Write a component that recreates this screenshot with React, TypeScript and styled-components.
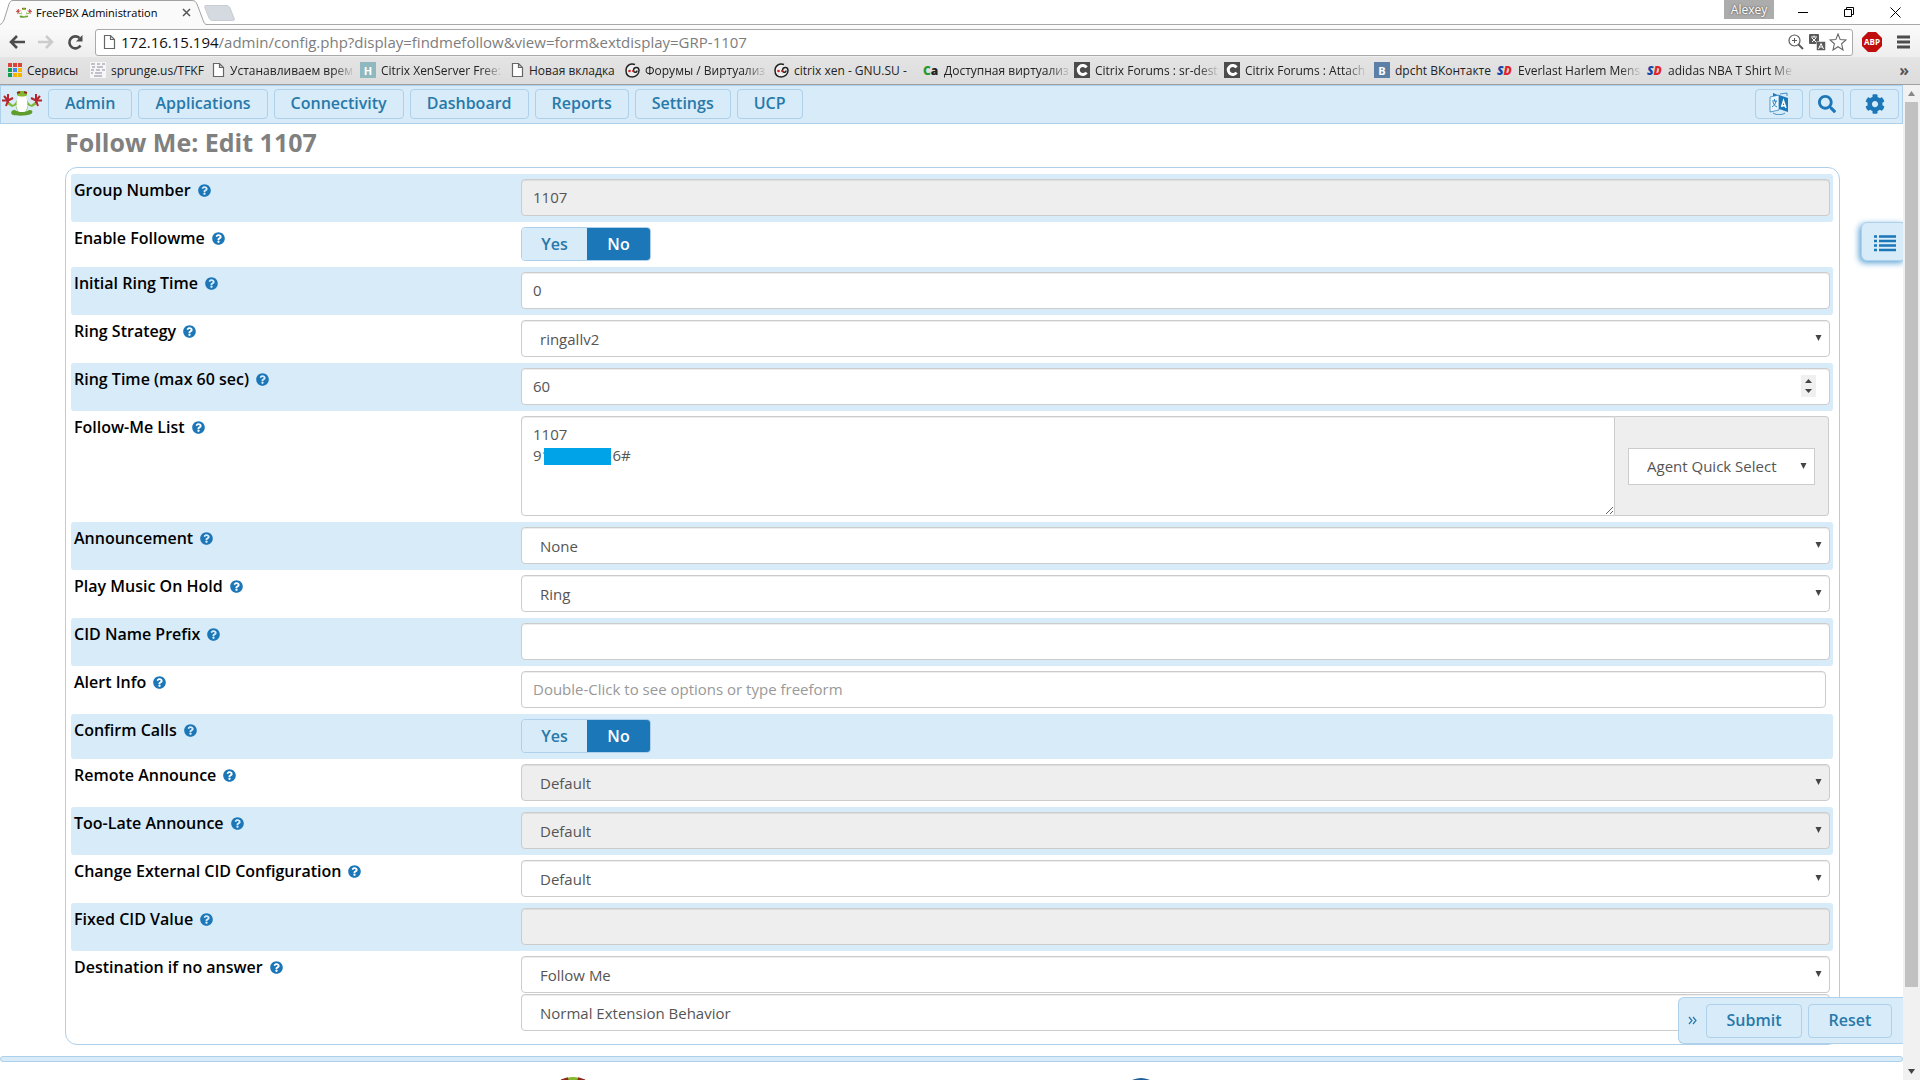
import React, { ReactNode } from "react";
import styled, { createGlobalStyle, css } from "styled-components";
import { FaCog, FaSearch, FaQuestionCircle } from "react-icons/fa";

const C = {
  pale: "#d7ebf9",
  edge: "#aed0ea",
  link: "#2779aa",
  active: "#1c77b8",
  field: "#cccccc",
  muted: "#eeeeee",
};

const Global = createGlobalStyle`
  *, *::before, *::after { box-sizing: border-box; }
  body { margin: 0; background: #fff; font-family: "Open Sans", "Noto Sans", sans-serif; color: #000; }
  button, input, select, textarea { font-family: inherit; margin: 0; }
  h1 { margin: 0; }
`;

const Window = styled.div`
  display: flex;
  flex-direction: column;
  height: 100vh;
  overflow: hidden;
`;

/* ---------- browser frame ---------- */

const Plain = styled.button`
  display: flex;
  align-items: center;
  justify-content: center;
  padding: 0;
  border: 0;
  background: none;
  color: inherit;
`;

const TabStrip = styled.header`
  display: flex;
  flex: none;
  height: 25px;
  border-bottom: 1px solid #a8a8a8;
`;

const Tab = styled.div`
  position: relative;
  z-index: 0;
  display: flex;
  align-items: center;
  width: 206px;
  height: 26px;
  padding: 0 15px 1px 16px;
`;

const TabShape = styled.svg`
  position: absolute;
  left: 0;
  top: 0;
  z-index: -1;
`;

const TabTitle = styled.span`
  flex: 1;
  padding-left: 4px;
  white-space: nowrap;
  font-size: 11px;
  line-height: 24px;
`;

const WindowControls = styled.div`
  display: flex;
  margin-left: auto;
  padding-right: 2px;
  height: 24px;
`;

const Profile = styled(Plain)`
  width: 50px;
  height: 19px;
  margin-right: 6px;
  background: #acacac;
  color: #fff;
  font-size: 12px;
  text-shadow: 0 0 2px #333;
`;

const WindowButton = styled(Plain)`
  width: 46px;
`;

const Toolbar = styled.div`
  display: flex;
  align-items: center;
  flex: none;
  height: 32px;
  padding: 3px 10px 1px 8px;
  background: linear-gradient(#fbfbfb, #eeeeee);
`;

const ToolButton = styled(Plain)`
  width: 18px;
  height: 18px;
  margin-right: 11px;
`;

const Omnibox = styled.div`
  display: flex;
  align-items: center;
  flex: 1;
  height: 27px;
  padding: 0 4px 0 7px;
  border: 1px solid #a9a9a9;
  border-radius: 3px;
  background: #fff;
`;

const Address = styled.div`
  flex: 1;
  padding-left: 5px;
  font-size: 15px;
  line-height: 24px;
  color: #7d7d7d;
  white-space: nowrap;
  b { font-weight: 400; color: #111; }
`;

const OmniButton = styled(Plain)`
  width: 20px;
  height: 20px;
  margin-left: 1px;
`;

const Extension = styled(Plain)`
  margin: 0 15px 0 9px;
`;

const Bookmarks = styled.nav`
  display: flex;
  align-items: center;
  flex: none;
  height: 28px;
  padding: 0 11px 1px 8px;
  background: linear-gradient(#e4e4e4, #dcdcdc);
  border-bottom: 1px solid #a0a0a0;
`;

const Bookmark = styled.a<{ $w: number }>`
  display: flex;
  align-items: center;
  flex: none;
  gap: 5px;
  width: ${(p) => p.$w}px;
  color: #222;
  font-size: 12px;
  text-decoration: none;
`;

const BookmarkText = styled.span<{ $fade?: boolean }>`
  white-space: nowrap;
  ${(p) => p.$fade && css`mask-image: linear-gradient(to left, rgba(0, 0, 0, 0.1), #000 20px);`}
`;

const Overflow = styled(Plain)`
  margin-left: auto;
  font-size: 16px;
  font-weight: 700;
  line-height: 20px;
  color: #555;
`;

const Letter = styled.span<{ $bg: string }>`
  display: flex;
  align-items: center;
  justify-content: center;
  width: 16px;
  height: 16px;
  background: ${(p) => p.$bg};
  color: #fff;
  font-size: 11px;
  font-weight: 700;
`;

const Mark = styled.span<{ $italic?: boolean }>`
  flex: none;
  width: 16px;
  font-size: 12px;
  font-weight: 800;
  white-space: nowrap;
  font-style: ${(p) => (p.$italic ? "italic" : "normal")};
`;

const Tint = styled.span<{ $c: string }>`
  color: ${(p) => p.$c};
`;

/* ---------- page ---------- */

const Viewport = styled.div`
  display: flex;
  flex: 1;
  min-height: 0;
`;

const Page = styled.div`
  position: relative;
  flex: 1;
  min-width: 0;
  overflow: hidden;
`;

const Scrollbar = styled.div`
  display: flex;
  flex-direction: column;
  align-items: center;
  flex: none;
  width: 17px;
  background: #f1f1f1;
`;

const ScrollThumb = styled.div`
  flex: 1;
  width: 13px;
  background: #c1c1c1;
`;

const ScrollRest = styled.div`
  height: 76px;
`;

const ScrollArrow = styled(Plain)`
  width: 17px;
  height: 17px;
`;

const NavBar = styled.nav`
  display: flex;
  align-items: center;
  gap: 6px;
  height: 39px;
  padding: 0 3px 2px 1px;
  background: ${C.pale};
  border: 1px solid ${C.edge};
`;

const Logo = styled.a`
  display: flex;
  width: 40px;
`;

const box = css`
  display: flex;
  align-items: center;
  justify-content: center;
  border: 1px solid ${C.edge};
  border-radius: 4px;
  background: ${C.pale};
  color: ${C.link};
  font-size: 16px;
  font-weight: 600;
`;

const NavButton = styled.button`
  ${box}
  height: 30px;
  padding: 0 16px 1px;
`;

const IconButton = styled.button<{ $w: number }>`
  ${box}
  width: ${(p) => p.$w}px;
  height: 30px;
  padding: 0;
  color: ${C.active};
`;

const Spacer = styled.span`
  flex: 1;
`;

const Content = styled.main`
  padding: 0 63px 0 65px;
`;

const Title = styled.h1`
  padding: 2px 0 9px;
  font-size: 25px;
  line-height: 32px;
  font-weight: 700;
  color: #808080;
`;

const Panel = styled.form`
  padding: 6px 6px 7px 5px;
  border: 1px solid ${C.edge};
  border-radius: 12px;
`;

const Row = styled.div<{ $striped?: boolean }>`
  display: grid;
  grid-template-columns: 1fr 3fr;
  padding: 5px 3px 6px;
  border-radius: 3px;
  background: ${(p) => (p.$striped ? C.pale : "transparent")};
`;

const LabelCell = styled.div`
  display: flex;
  align-items: center;
  align-self: start;
  gap: 7px;
  font-size: 16px;
  line-height: 22px;
  font-weight: 600;
  svg { color: ${C.active}; }
`;

const FieldCell = styled.div`
  display: grid;
  gap: 1px;
  padding-left: 8px;
`;

const fieldBox = css`
  display: block;
  width: 100%;
  height: 37px;
  border: 1px solid ${C.field};
  border-radius: 4px;
  background: #fff;
  box-shadow: inset 0 1px 1px rgba(0, 0, 0, 0.075);
  color: #555;
  font-size: 15px;
  font-weight: 400;
  opacity: 1;
  &:disabled, &:read-only:not(select) { background: ${C.muted}; }
`;

const Input = styled.input`
  ${fieldBox}
  padding: 0 11px 2px;
  &::placeholder { color: #999; }
  &::-webkit-inner-spin-button { display: none; }
`;

const ShortField = styled.div`
  padding-right: 4px;
`;

const SelectWrap = styled.div<{ $w?: number }>`
  position: relative;
  width: ${(p) => (p.$w ? p.$w + "px" : "auto")};
`;

const SelectBox = styled.select<{ $square?: boolean }>`
  ${fieldBox}
  appearance: none;
  padding: 0 18px;
  ${(p) => p.$square && css`border-radius: 0; box-shadow: none;`}
`;

const Arrow = styled.svg`
  position: absolute;
  right: 8px;
  top: 15px;
  pointer-events: none;
`;

const Spinner = styled.svg`
  position: absolute;
  right: 14px;
  top: 7px;
  pointer-events: none;
`;

const Group = styled.div`
  display: flex;
  height: 100px;
  margin-right: 1px;
`;

const AreaWrap = styled.div`
  position: relative;
  flex: 1;
`;

const Area = styled.textarea`
  ${fieldBox}
  height: 100px;
  padding: 7px 11px;
  line-height: 21px;
  border-radius: 4px 0 0 4px;
  resize: vertical;
`;

const Redaction = styled.span`
  position: absolute;
  left: 23px;
  top: 32px;
  width: 67px;
  height: 17px;
  background: #00a2e8;
`;

const Addon = styled.div`
  display: flex;
  align-items: center;
  padding: 0 13px;
  border: 1px solid ${C.field};
  border-left: 0;
  border-radius: 0 4px 4px 0;
  background: ${C.muted};
`;

const ToggleSet = styled.div`
  display: flex;
  width: 130px;
  height: 34px;
  border: 1px solid ${C.edge};
  border-radius: 4px;
  overflow: hidden;
`;

const ToggleOption = styled.label<{ $on?: boolean }>`
  display: flex;
  align-items: center;
  justify-content: center;
  flex: ${(p) => (p.$on ? "0 0 63px" : "1")};
  background: ${(p) => (p.$on ? C.active : C.pale)};
  color: ${(p) => (p.$on ? "#fff" : C.link)};
  font-size: 16px;
  font-weight: 600;
`;

const HiddenRadio = styled.input`
  position: absolute;
  opacity: 0;
  pointer-events: none;
`;

const FooterRule = styled.hr`
  height: 6px;
  margin: 11px 0 15px;
  border: 1px solid ${C.edge};
  border-radius: 3px;
  background: ${C.pale};
`;

const Footer = styled.footer`
  display: grid;
  grid-template-columns: 65fr 57fr 78fr;
  padding-left: 1px;
  svg { justify-self: end; }
`;

const SideMenu = styled.button`
  position: absolute;
  right: -4px;
  top: 137px;
  display: flex;
  align-items: center;
  width: 46px;
  height: 39px;
  padding: 3px 0 0 12px;
  border: 1px solid ${C.edge};
  border-radius: 6px;
  background: ${C.pale};
  box-shadow: -2px 2px 6px #5ba3d6;
`;

const ActionBar = styled.div`
  position: absolute;
  right: 0;
  bottom: 36px;
  display: flex;
  align-items: center;
  gap: 6px;
  height: 47px;
  padding: 0 11px 0 0;
  border: 1px solid ${C.edge};
  border-right: 0;
  border-radius: 6px 0 0 6px;
  background: ${C.pale};
`;

const Collapse = styled(Plain)`
  width: 21px;
  padding-left: 6px;
  color: ${C.link};
`;

const Action = styled.button<{ $w: number }>`
  ${box}
  width: ${(p) => p.$w}px;
  height: 34px;
  padding: 0 0 1px;
`;

/* ---------- drawings ---------- */

const Frog = ({ w, h }: { w: number; h: number }) => (
  <svg width={w} height={h} viewBox="0 0 40 26" aria-hidden>
    <path d="M16 6C15 9 14 12 11 14L7 11L5 13L10 16C13 15 14 14 15 14C14 16 14 19 17 21H23C26 19 26 16 25 14C26 14 27 15 30 16L35 13L33 11L29 14C26 12 25 9 24 6Z" fill="#7fb93a" />
    <path d="M16 5C14 10 14 19 17 21C18 22 22 22 23 21C26 19 26 10 24 5Z" fill="#fff" />
    <path d="M15 4C15 1 17 0 20 0S25 1 25 4C24 6 16 6 15 4Z" fill="#86b82d" />
    <path d="M15 2L18 1M25 2L22 1" stroke="#8d2a1a" strokeWidth="2" />
    <path d="M12 19C14 19 15 21 20 21S26 19 28 19C31 19 31 22 29 23C25 25 15 25 11 24C8 23 9 19 12 19Z" fill="#5f9e2c" />
    <path d="M2 5L6 9.500L6 3M6 9.500L11 7M6 9.500L0 9.500M6 9.500L4 15M38 5L34 9.500L34 3M34 9.500L29 7M34 9.500L40 9.500M34 9.500L36 15" stroke="#b8242c" strokeWidth="2" fill="none" />
  </svg>
);

const FileIcon = () => (
  <svg width="13" height="16" viewBox="0 0 13 16" aria-hidden>
    <path d="M1.500 1.500H7.500L11.500 5.500V14.500H1.500Z M7.500 1.500V5.500H11.500" fill="#fff" stroke="#666" strokeWidth="1.200" />
  </svg>
);

const Apps = () => (
  <svg width="14" height="14" viewBox="0 0 14 14" aria-hidden>
    {["#db4437", "#db4437", "#db4437", "#0f9d58", "#4285f4", "#f4b400", "#0f9d58", "#f4b400", "#f4b400"].map((c, i) => (
      <rect key={i} x={(i % 3) * 5} y={Math.floor(i / 3) * 5} width="4" height="4" fill={c} />
    ))}
  </svg>
);

const Snippet = () => (
  <svg width="16" height="16" viewBox="0 0 16 16" aria-hidden>
    <rect width="16" height="16" fill="#f6f6f6" />
    <path d="M1 2h4M7 2h3M12 2h3M2 5h3M7 5h6M1 8h3M6 8h4M12 8h3M1 11h2M5 11h7M4 14h8" stroke="#8b8ba0" />
  </svg>
);

const Swirl = () => (
  <svg width="15" height="15" viewBox="0 0 15 15" aria-hidden>
    <path d="M10 1.500C5 -0.500 1 3 1 7.500S4 14 7.500 14 14 11 14 7.500C14 3.500 9 3.500 8.500 7C8.500 10 12 10 12 7.500" fill="#eee" stroke="#222" strokeWidth="1.500" />
    <circle cx="4.500" cy="8" r="1.300" fill="#c22" />
    <circle cx="8" cy="8" r="1" fill="#c22" />
  </svg>
);

const CitrixC = () => (
  <svg width="16" height="16" viewBox="0 0 16 16" aria-hidden>
    <rect width="16" height="16" fill="#4c4c4c" />
    <path d="M12.500 5.500A4.500 4.500 0 1 0 12.500 10.500" fill="none" stroke="#fff" strokeWidth="3" />
  </svg>
);

const SelectArrow = () => (
  <Arrow width="7" height="6" viewBox="0 0 7 6" aria-hidden>
    <path d="M0.500 0H6.500L3.500 6Z" fill="#444" />
  </Arrow>
);

const Translate = () => (
  <svg width="20" height="23" viewBox="0 0 20 23" aria-hidden>
    <path d="M4 1L11 4V7L4 4Z" fill={C.active} />
    <path d="M1 5L10 3V18L1 20Z" fill="#e9f4fc" stroke={C.active} strokeWidth="0.700" />
    <path d="M10 3L19 6V20L10 17Z" fill={C.active} />
    <path d="M12.500 15L14.500 8.500L17 16M13 13.500L16 14" fill="none" stroke="#fff" strokeWidth="1.400" />
    <path d="M3 9H8M5.500 7V9M7 9C6.500 12 5 14 3 15M4 10C5 13 6 14 8 15" fill="none" stroke={C.active} strokeWidth="0.900" />
    <path d="M4 21C8 23.500 13 23 16 21M11 2L18 1V4" fill="none" stroke={C.active} strokeWidth="0.800" />
  </svg>
);

/* ---------- fields ---------- */

const Select = ({ id, value, disabled }: { id: string; value: string; disabled?: boolean }) => (
  <SelectWrap>
    <SelectBox id={id} disabled={disabled}>
      <option>{value}</option>
    </SelectBox>
    <SelectArrow />
  </SelectWrap>
);

const YesNo = ({ id }: { id: string }) => (
  <ToggleSet>
    <ToggleOption>
      <HiddenRadio type="radio" name={id} />
      Yes
    </ToggleOption>
    <ToggleOption $on>
      <HiddenRadio type="radio" name={id} id={id} defaultChecked />
      No
    </ToggleOption>
  </ToggleSet>
);

const fields: { id: string; label: string; control: ReactNode }[] = [
  { id: "grpnum", label: "Group Number", control: <Input id="grpnum" defaultValue="1107" readOnly /> },
  { id: "ddial", label: "Enable Followme", control: <YesNo id="ddial" /> },
  { id: "prering", label: "Initial Ring Time", control: <Input id="prering" defaultValue="0" /> },
  { id: "strategy", label: "Ring Strategy", control: <Select id="strategy" value="ringallv2" /> },
  {
    id: "grptime",
    label: "Ring Time (max 60 sec)",
    control: (
      <SelectWrap>
        <Input id="grptime" type="number" defaultValue="60" />
        <Spinner width="15" height="22" viewBox="0 0 15 22" aria-hidden>
          <rect width="15" height="22" fill="#f0f0f0" />
          <path d="M4 8L7.500 4L11 8ZM4 14L7.500 18L11 14Z" fill="#444" />
        </Spinner>
      </SelectWrap>
    ),
  },
  {
    id: "grplist",
    label: "Follow-Me List",
    control: (
      <Group>
        <AreaWrap>
          <Area id="grplist" defaultValue={"1107\n91" + "\u00a0".repeat(16) + "6#"} />
          <Redaction />
        </AreaWrap>
        <Addon>
          <SelectWrap $w={187}>
            <SelectBox $square aria-label="Agent Quick Select">
              <option>Agent Quick Select</option>
            </SelectBox>
            <SelectArrow />
          </SelectWrap>
        </Addon>
      </Group>
    ),
  },
  { id: "annmsg", label: "Announcement", control: <Select id="annmsg" value="None" /> },
  { id: "ringing", label: "Play Music On Hold", control: <Select id="ringing" value="Ring" /> },
  { id: "grppre", label: "CID Name Prefix", control: <Input id="grppre" /> },
  {
    id: "dring",
    label: "Alert Info",
    control: (
      <ShortField>
        <Input id="dring" placeholder="Double-Click to see options or type freeform" />
      </ShortField>
    ),
  },
  { id: "needsconf", label: "Confirm Calls", control: <YesNo id="needsconf" /> },
  { id: "remotealert", label: "Remote Announce", control: <Select id="remotealert" value="Default" disabled /> },
  { id: "toolate", label: "Too-Late Announce", control: <Select id="toolate" value="Default" disabled /> },
  { id: "changecid", label: "Change External CID Configuration", control: <Select id="changecid" value="Default" /> },
  { id: "fixedcid", label: "Fixed CID Value", control: <Input id="fixedcid" disabled /> },
  {
    id: "goto",
    label: "Destination if no answer",
    control: (
      <>
        <Select id="goto" value="Follow Me" />
        <SelectWrap>
          <SelectBox aria-label="Destination">
            <option>Normal Extension Behavior</option>
          </SelectBox>
        </SelectWrap>
      </>
    ),
  },
];

const SD = () => (
  <Mark $italic>
    <Tint $c="#1747a6">S</Tint>
    <Tint $c="#e0262d">D</Tint>
  </Mark>
);

const bookmarks: { icon: ReactNode; text: string; w: number; fade?: boolean }[] = [
  { icon: <Apps />, text: "Сервисы", w: 82 },
  { icon: <Snippet />, text: "sprunge.us/TFKF", w: 122 },
  { icon: <FileIcon />, text: "Устанавливаем врем", w: 148, fade: true },
  { icon: <Letter $bg="#8fb9bf">H</Letter>, text: "Citrix XenServer Free:", w: 151, fade: true },
  { icon: <FileIcon />, text: "Новая вкладка", w: 114 },
  { icon: <Swirl />, text: "Форумы / Виртуализ", w: 149, fade: true },
  { icon: <Swirl />, text: "citrix xen - GNU.SU -", w: 149 },
  {
    icon: (
      <Mark>
        <Tint $c="#2a9a2a">C</Tint>a
      </Mark>
    ),
    text: "Доступная виртуализ",
    w: 151,
    fade: true,
  },
  { icon: <CitrixC />, text: "Citrix Forums : sr-dest", w: 150, fade: true },
  { icon: <CitrixC />, text: "Citrix Forums : Attach", w: 150, fade: true },
  { icon: <Letter $bg="#5b7fa6">B</Letter>, text: "dpcht ВКонтакте", w: 123 },
  { icon: <SD />, text: "Everlast Harlem Mens", w: 150, fade: true },
  { icon: <SD />, text: "adidas NBA T Shirt Me", w: 150, fade: true },
];

const menu = ["Admin", "Applications", "Connectivity", "Dashboard", "Reports", "Settings", "UCP"];

export default function App() {
  return (
    <Window>
      <Global />
      <TabStrip>
        <Tab>
          <TabShape width="240" height="26" viewBox="0 0 240 26" aria-hidden>
            <path d="M0 24.500C2 24 3 22 4 20L9 4C10 1.500 11 0.500 13 0.500H192C195 0.500 196 2 197 4L203 20C204 23 205 24.500 207 24.500V26H0Z" fill="#fafafa" />
            <path d="M0 24.500C2 24 3 22 4 20L9 4C10 1.500 11 0.500 13 0.500H192C195 0.500 196 2 197 4L203 20C204 23 205 24.500 207 24.500" fill="none" stroke="#a0a0a0" />
            <path d="M206 5.500H226C228 5.500 229 6 230 8L234 18C235 20 234 20.500 232 20.500H213C211 20.500 210 20 209 18L205 8C204.500 6 204.500 5.500 206 5.500Z" fill="#d5d9e0" stroke="#c9ccd2" />
          </TabShape>
          <Frog w={16} h={12} />
          <TabTitle>FreePBX Administration</TabTitle>
          <Plain aria-label="Close tab">
            <svg width="9" height="9" viewBox="0 0 9 9">
              <path d="M1 1L8 8M8 1L1 8" stroke="#555" strokeWidth="1.500" />
            </svg>
          </Plain>
        </Tab>
        <WindowControls>
          <Profile>Alexey</Profile>
          <WindowButton aria-label="Minimize">
            <svg width="10" height="10"><path d="M0 5.500H10" stroke="#000" /></svg>
          </WindowButton>
          <WindowButton aria-label="Restore">
            <svg width="10" height="10"><path d="M0.500 2.500H7.500V9.500H0.500ZM2.500 2.500V0.500H9.500V7.500H7.500" fill="none" stroke="#000" /></svg>
          </WindowButton>
          <WindowButton aria-label="Close">
            <svg width="11" height="11"><path d="M0.500 0.500L10.500 10.500M10.500 0.500L0.500 10.500" stroke="#000" /></svg>
          </WindowButton>
        </WindowControls>
      </TabStrip>
      <Toolbar>
        <ToolButton aria-label="Back">
          <svg width="18" height="16" viewBox="0 0 18 16"><path d="M17 8H3M9 2L3 8L9 14" fill="none" stroke="#4d4d4d" strokeWidth="2.600" /></svg>
        </ToolButton>
        <ToolButton aria-label="Forward">
          <svg width="18" height="16" viewBox="0 0 18 16"><path d="M1 8H15M9 2L15 8L9 14" fill="none" stroke="#cccccc" strokeWidth="2.600" /></svg>
        </ToolButton>
        <ToolButton aria-label="Reload">
          <svg width="17" height="17" viewBox="0 0 17 17">
            <path d="M13.500 11.500A6 6 0 1 1 12.500 4" fill="none" stroke="#4d4d4d" strokeWidth="2.600" />
            <path d="M15.500 1V7.500H9Z" fill="#4d4d4d" />
          </svg>
        </ToolButton>
        <Omnibox>
          <FileIcon />
          <Address role="textbox" aria-label="Address">
            <b>172.16.15.194</b>/admin/config.php?display=findmefollow&amp;view=form&amp;extdisplay=GRP-1107
          </Address>
          <OmniButton aria-label="Zoom">
            <svg width="16" height="16" viewBox="0 0 16 16">
              <circle cx="6.500" cy="6.500" r="5.500" fill="none" stroke="#5a5a5a" strokeWidth="1.200" />
              <path d="M4 6.500H9M6.500 4V9" stroke="#5a5a5a" />
              <path d="M10.500 10.500L15 15" stroke="#5a5a5a" strokeWidth="2" />
            </svg>
          </OmniButton>
          <OmniButton aria-label="Translate page">
            <svg width="17" height="17" viewBox="0 0 17 17">
              <rect width="10" height="10" rx="1" fill="#5a5a5a" />
              <path d="M2 3H8M5 1.500V3M3 4L7 8M7 4L3 8" stroke="#fff" fill="none" />
              <rect x="7.500" y="7.500" width="9" height="9" rx="1" fill="#5a5a5a" stroke="#fff" strokeWidth="0.500" />
              <path d="M9.500 15L12 9.500L14.500 15M10.500 13H13.500" stroke="#fff" fill="none" />
            </svg>
          </OmniButton>
          <OmniButton aria-label="Bookmark">
            <svg width="18" height="18" viewBox="0 0 18 18">
              <path d="M9 1L11.200 6.600L17 7L12.600 10.800L14 17L9 13.700L4 17L5.400 10.800L1 7L6.800 6.600Z" fill="#fff" stroke="#666" strokeWidth="1.100" />
            </svg>
          </OmniButton>
        </Omnibox>
        <Extension aria-label="Adblock Plus">
          <svg width="20" height="20" viewBox="0 0 20 20">
            <path d="M6 0H14L20 6V14L14 20H6L0 14V6Z" fill="#c00d0d" />
            <text x="10" y="13" textAnchor="middle" fontSize="8" fontWeight="700" fill="#fff">ABP</text>
          </svg>
        </Extension>
        <Plain aria-label="Menu">
          <svg width="13" height="14" viewBox="0 0 13 14"><path d="M0 2H13M0 7H13M0 12H13" stroke="#4d4d4d" strokeWidth="3" /></svg>
        </Plain>
      </Toolbar>
      <Bookmarks>
        {bookmarks.map((b, i) => (
          <Bookmark key={i} href="#" $w={b.w}>
            {b.icon}
            <BookmarkText $fade={b.fade}>{b.text}</BookmarkText>
          </Bookmark>
        ))}
        <Overflow aria-label="More bookmarks">»</Overflow>
      </Bookmarks>

      <Viewport>
        <Page>
          <NavBar>
            <Logo href="#" aria-label="FreePBX">
              <Frog w={40} h={26} />
            </Logo>
            {menu.map((m) => (
              <NavButton key={m}>{m}</NavButton>
            ))}
            <Spacer />
            <IconButton $w={48} aria-label="Language"><Translate /></IconButton>
            <IconButton $w={35} aria-label="Search"><FaSearch size={18} /></IconButton>
            <IconButton $w={49} aria-label="Settings"><FaCog size={20} /></IconButton>
          </NavBar>
          <Content>
            <Title>Follow Me: Edit 1107</Title>
            <Panel>
              {fields.map((f, i) => (
                <Row key={f.id} $striped={i % 2 === 0}>
                  <LabelCell>
                    <label htmlFor={f.id}>{f.label}</label>
                    <FaQuestionCircle size={13} />
                  </LabelCell>
                  <FieldCell>{f.control}</FieldCell>
                </Row>
              ))}
            </Panel>
          </Content>
          <FooterRule />
          <Footer>
            <Frog w={92} h={60} />
            <svg width="40" height="40" viewBox="0 0 40 40" aria-hidden>
              <circle cx="20" cy="21" r="20" fill="#1c5f9a" />
            </svg>
          </Footer>
          <SideMenu aria-label="Open list">
            <svg width="22" height="17" viewBox="0 0 22 17">
              <path d="M0 1.500H3M5 1.500H22M0 6H3M5 6H22M0 10.500H3M5 10.500H22M0 15H3M5 15H22" stroke={C.active} strokeWidth="2.600" />
            </svg>
          </SideMenu>
          <ActionBar>
            <Collapse aria-label="Collapse">
              <svg width="9" height="9" viewBox="0 0 9 9"><path d="M1 1L4 4.500L1 8M5 1L8 4.500L5 8" fill="none" stroke={C.link} strokeWidth="1.200" /></svg>
            </Collapse>
            <Action $w={96}>Submit</Action>
            <Action $w={84}>Reset</Action>
          </ActionBar>
        </Page>
        <Scrollbar>
          <ScrollArrow aria-label="Scroll up">
            <svg width="7" height="5"><path d="M0 5L3.500 0L7 5Z" fill="#888" /></svg>
          </ScrollArrow>
          <ScrollThumb />
          <ScrollRest />
          <ScrollArrow aria-label="Scroll down">
            <svg width="7" height="5"><path d="M0 0L3.500 5L7 0Z" fill="#444" /></svg>
          </ScrollArrow>
        </Scrollbar>
      </Viewport>
    </Window>
  );
}
